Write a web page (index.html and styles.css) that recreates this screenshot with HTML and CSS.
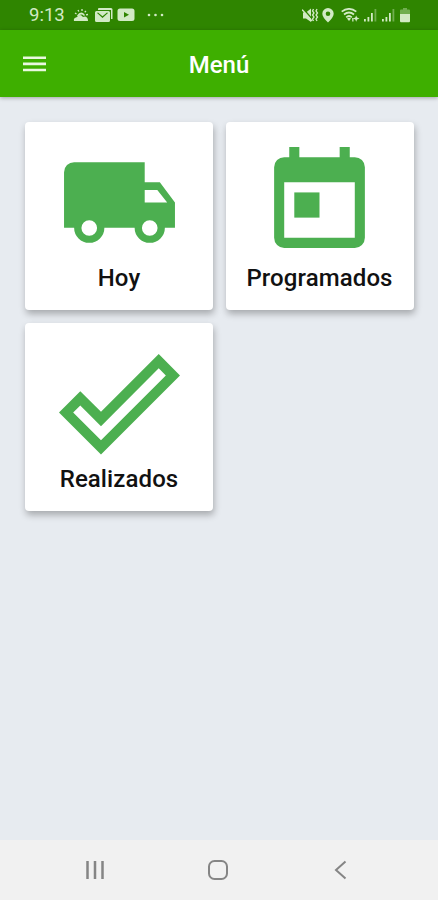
FILE: index.html
```html
<!DOCTYPE html>
<html lang="es">
<head>
  <meta charset="UTF-8">
  <meta name="viewport" content="width=device-width, initial-scale=1">
  <title>Menú</title>
  <link rel="stylesheet" href="styles.css">
</head>
<body>
  <div class="status-bar">
    <span class="time">9:13</span>
    <svg class="weather" width="16" height="14" viewBox="0 0 16 14">
      <path d="M1 13Q0 10 4 9Q7 5 10 9L12 8.500Q15 9 15 13Z"/>
      <path d="M4 7.500Q8 2 12 7L11 8Q8 5 5 8.500Z"/>
      <path class="line" d="M2 5l1.500 1M5 2l.8 1.500M9 1v2M13 3l-1.300 1.200M15 6.500l-2 .4"/>
    </svg>
    <svg class="mail" width="18" height="15" viewBox="0 0 18 15">
      <path d="M4 0H16Q17.500 0 17.500 1.500V11H16V2H3V1Q3 0 4 0Z"/>
      <path fill-rule="evenodd" d="M1.500 3H13.500Q15 3 15 4.500V12.500Q15 14 13.500 14H1.500Q0 14 0 12.500V4.500Q0 3 1.500 3ZM2 5L7.500 10L13 5L12 4.500L7.500 8.300L3 4.500Z"/>
    </svg>
    <svg class="video" width="18" height="14" viewBox="0 0 18 14">
      <path fill-rule="evenodd" d="M3 .5H15Q17.500 .5 17.500 3V10.500Q17.500 13 15 13H3Q.5 13 .5 10.500V3Q.5 .5 3 .5ZM7 4V9.500L12 6.700Z"/>
    </svg>
    <svg class="dots" width="18" height="4" viewBox="0 0 18 4">
      <circle cx="2" cy="2" r="1.300"/><circle cx="8.500" cy="2" r="1.300"/><circle cx="15" cy="2" r="1.300"/>
    </svg>

    <svg class="mute" width="17" height="15" viewBox="0 0 17 15">
      <path d="M1 4.500H4L9 .5V14L4 10.500H1Z"/>
      <path class="cut" d="M1.500 1L11 12"/>
      <path class="line" d="M0 1.500L10 13"/>
      <path class="line" d="M11.500 1l-1 2l1.500 2l-1.500 2l1.500 2l-1.500 2l1 2M15 1l-1 2l1.500 2l-1.500 2l1.500 2l-1.500 2l1 2"/>
    </svg>
    <svg class="pin" width="12" height="15" viewBox="0 0 12 15">
      <path fill-rule="evenodd" d="M6 0A5.700 5.700 0 0 1 11.700 5.700Q11.700 9 6 14.500Q.3 9 .3 5.700A5.700 5.700 0 0 1 6 0ZM6 3.500A2.300 2.300 0 1 0 6 8.100A2.300 2.300 0 1 0 6 3.500Z"/>
    </svg>
    <svg class="wifi" width="19" height="15" viewBox="0 0 19 15">
      <path class="wave" d="M.7 3.600Q8 -1.800 15.300 3.600M3 6.500Q8 2.500 13 6.500M5.200 9.300Q8 6.800 10.800 9.300"/>
      <path d="M6 10.500Q8 9 10 10.500L8 13Z"/>
      <path d="M12.500 10v3.500h-1.300v-3.500ZM15.200 7.500l.9 2.100l2.400.9l-2.400.9l-.9 2.400l-.9-2.400l-2.100-.9l2.100-.9Z"/>
    </svg>
    <svg class="signal" width="14" height="14" viewBox="0 0 14 14">
      <path d="M0 11h1.800v2.500H0ZM3.500 9h1.800v4.500H3.500ZM7 5h1.800v8.500H7Z"/>
      <path class="faint" d="M10.500 1h1.800v12.500h-1.800Z"/>
    </svg>
    <svg class="signal" width="14" height="14" viewBox="0 0 14 14">
      <path d="M0 11h1.800v2.500H0ZM3.500 9h1.800v4.500H3.500ZM7 5h1.800v8.500H7Z"/>
      <path class="faint" d="M10.500 1h1.800v12.500h-1.800Z"/>
    </svg>
    <svg class="battery" width="10" height="15" viewBox="0 0 10 15">
      <path class="faint" d="M3 0H7V1.500H9Q10 1.500 10 2.500V6H0V2.500Q0 1.500 1 1.500H3Z"/>
      <path d="M0 6H10V13Q10 14.200 9 14.200H1Q0 14.200 0 13Z"/>
    </svg>
  </div>

  <header class="toolbar">
    <svg class="menu-icon" width="23" height="16" viewBox="0 0 23 16">
      <path d="M0 .5H23V3.100H0ZM0 6.600H23V9.200H0ZM0 12.700H23V15.300H0Z"/>
    </svg>
    <h1>Menú</h1>
  </header>

  <main class="cards">
    <a class="card">
      <svg viewBox="0 0 24 24">
        <path fill-rule="evenodd" d="M3 4H17V8H20L23 12V17H21A3 3 0 0 1 15 17H9A3 3 0 0 1 3 17H1V6A2 2 0 0 1 3 4ZM17 9.500V12H21.460L19.500 9.500ZM6 15.500A1.550 1.550 0 1 0 6 18.600A1.550 1.550 0 1 0 6 15.500ZM18 15.500A1.550 1.550 0 1 0 18 18.600A1.550 1.550 0 1 0 18 15.500Z"/>
      </svg>
      <span>Hoy</span>
    </a>
    <a class="card">
      <svg viewBox="0 0 24 24">
        <path fill-rule="evenodd" d="M6 1H8V3H16V1H18V3H19A2 2 0 0 1 21 5V19A2 2 0 0 1 19 21H5A2 2 0 0 1 3 19V5A2 2 0 0 1 5 3H6ZM5 8V19H19V8Z"/>
        <path d="M7 10H12V15H7Z"/>
      </svg>
      <span>Programados</span>
    </a>
    <a class="card">
      <svg viewBox="0 0 24 24">
        <path fill-rule="evenodd" d="M19.780 2.200L24 6.440L8.330 22.110L0 13.780L4.220 9.550L8.330 13.660ZM19.780 5L8.330 16.500L4.220 12.380L2.810 13.780L8.330 19.290L21.190 6.440Z"/>
      </svg>
      <span>Realizados</span>
    </a>
  </main>

  <nav class="nav-bar">
    <svg width="20" height="20" viewBox="0 0 20 20"><path d="M2.500 1V19M10 1V19M17.500 1V19"/></svg>
    <svg width="20" height="20" viewBox="0 0 20 20"><rect x="1" y="1" width="18" height="18" rx="5.500"/></svg>
    <svg width="20" height="20" viewBox="0 0 20 20"><path d="M14.500 1.500L5 10L14.500 18.500"/></svg>
  </nav>
</body>
</html>
```
FILE: styles.css
```css
* {
  box-sizing: border-box;
}

body {
  margin: 0;
  height: 900px;
  display: flex;
  flex-direction: column;
  font-family: Roboto, sans-serif;
  background: #e7ebf0;
  color: #111;
}

svg {
  display: block;
  flex: none;
}

/* status bar */
.status-bar {
  height: 30px;
  padding: 0 28px 0 29px;
  display: flex;
  align-items: center;
  background: #2f8500;
  color: #d2eac5;
  fill: #d2eac5;
}

.time {
  width: 44px;
  font-size: 18.5px;
}

.mail {
  margin-left: 6px;
}

.video {
  margin-left: 4px;
}

.dots {
  margin-left: 12px;
}

.mute {
  margin-left: auto;
}

.pin {
  margin-left: 3px;
}

.wifi {
  margin-left: 7px;
}

.signal {
  margin-left: 4px;
}

.battery {
  margin-left: 4px;
}

.line,
.wave {
  fill: none;
  stroke: #d2eac5;
  stroke-width: 1.3;
}

.wave {
  stroke-width: 1.8;
}

.cut {
  stroke: #2f8500;
  stroke-width: 1.3;
}

.faint {
  opacity: 0.4;
}

/* toolbar */
.toolbar {
  height: 67px;
  padding: 0 23px;
  display: grid;
  grid-template-columns: 23px 1fr 23px;
  align-items: center;
  background: #3eaf00;
  color: #fff;
  box-shadow: 0 1px 4px rgba(0, 0, 0, 0.3);
}

.menu-icon {
  fill: #e9f8e0;
}

.toolbar h1 {
  margin: 3px 0 0;
  font-size: 24px;
  font-weight: 500;
  text-align: center;
}

/* cards */
.cards {
  flex: 1;
  padding: 25px 24px 0 25px;
  display: grid;
  grid-template-columns: 188px 188px;
  grid-auto-rows: 188px;
  gap: 13px 12.5px;
  align-content: start;
}

.card {
  padding-top: 20px;
  display: flex;
  flex-direction: column;
  align-items: center;
  background: #fff;
  border-radius: 4px;
  box-shadow: 1px 4px 7px rgba(0, 0, 0, 0.28);
}

.card svg {
  width: 121px;
  height: 121px;
  fill: #4caf50;
}

.card span {
  margin-top: 1px;
  font-size: 24px;
  line-height: 28px;
  font-weight: 500;
  letter-spacing: 0.1px;
}

/* navigation bar */
.nav-bar {
  height: 60px;
  padding: 0 87px 0 85px;
  display: flex;
  align-items: center;
  justify-content: space-between;
  background: #f1f1f1;
}

.nav-bar svg {
  fill: none;
  stroke: #858585;
  stroke-width: 2;
}

.nav-bar svg:first-child {
  stroke-width: 2.5;
}
```
